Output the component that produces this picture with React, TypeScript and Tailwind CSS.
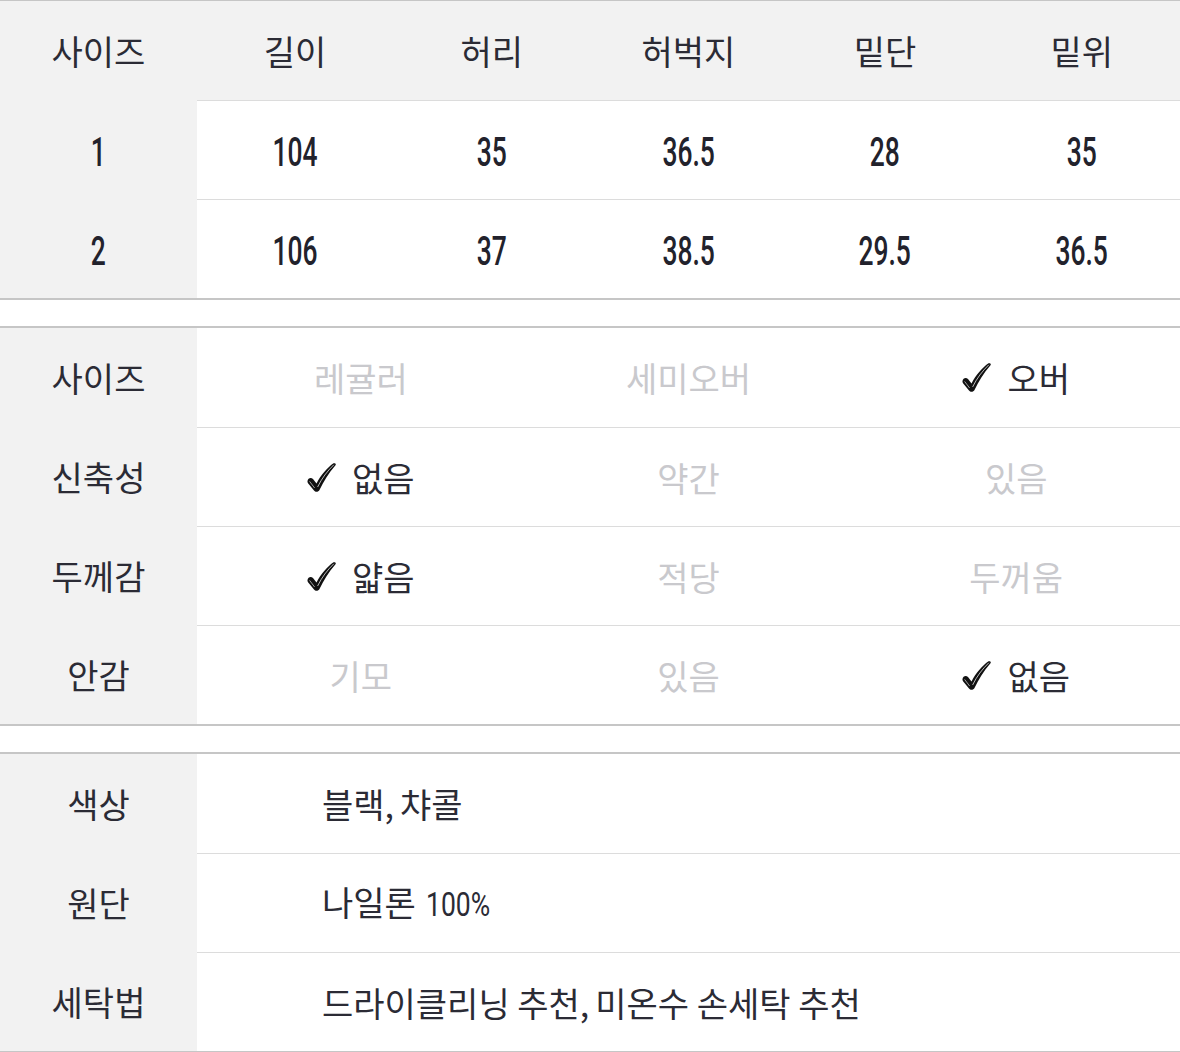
import React from 'react';

const kr = "font-['Noto_Sans_CJK_KR','Noto_Sans',sans-serif]";

// condensed digits: Roboto squeezed horizontally
const Num = ({ children, big }: { children: React.ReactNode; big?: boolean }) => (
    <span
        className={`inline-block font-['Roboto',sans-serif] ${big ? 'font-medium text-[40px] scale-x-[0.66] origin-center' : 'font-normal text-[34px] scale-x-[0.78] origin-left -mr-[14px] ml-[3px]'}`}
    >
        {children}
    </span>
);

const Check = () => (
    <svg width="29" height="29" viewBox="0 0 29 29" className="mr-[16px] shrink-0">
        {/* brush style check mark */}
        <path d="M0.5 18 C1 15 4 14 6 16 L9.5 20.5 C14 12 20 5 26.5 0.3 C28 -0.3 29.4 1 28.5 2.2 C21.5 10 16.5 18.5 12.5 27 C11.5 29 8.5 29.5 7 27.5 L1.2 20.5 C0.6 19.8 0.4 19 0.5 18 Z" fill="#111" />
        <path d="M10.6 24 C15 15 20 8.5 26.8 1.8" stroke="#fff" strokeWidth="0.7" fill="none" />
        <path d="M2.6 18.4 L7.6 25" stroke="#fff" strokeWidth="0.6" fill="none" />
    </svg>
);

const sizeHead = ['사이즈', '길이', '허리', '허벅지', '밑단', '밑위'];
const sizeRows = [
    ['1', '104', '35', '36.5', '28', '35'],
    ['2', '106', '37', '38.5', '29.5', '36.5'],
];

const fitRows: { label: string; opts: string[]; sel: number }[] = [
    { label: '사이즈', opts: ['레귤러', '세미오버', '오버'], sel: 2 },
    { label: '신축성', opts: ['없음', '약간', '있음'], sel: 0 },
    { label: '두께감', opts: ['얇음', '적당', '두꺼움'], sel: 0 },
    { label: '안감', opts: ['기모', '있음', '없음'], sel: 2 },
];

const Label = ({ children }: { children: React.ReactNode }) => (
    <div className="h-[99px] bg-[#f2f2f2] flex items-center justify-center text-[34px] text-[#2b2b35]">
        {children}
    </div>
);

export default function App() {
    return (
        <div className={`w-[1180px] bg-white ${kr}`}>
            {/* size table */}
            <div className="border-t border-b-2 border-[#c6c6c6]">
                <div className="grid grid-cols-6 bg-[#f2f2f2]">
                    {sizeHead.map((h) => (
                        <div key={h} className="h-[99px] flex items-center justify-center text-[34px] text-[#2b2b35]">
                            {h}
                        </div>
                    ))}
                </div>
                {sizeRows.map((r) => (
                    <div key={r[0]} className="grid grid-cols-6">
                        {r.map((v, i) => (
                            <div
                                key={i}
                                className={`h-[99px] flex items-center justify-center pt-[6px] text-[#22222c] ${i === 0 ? 'bg-[#f2f2f2]' : 'border-t border-[#dcdcdc]'}`}
                            >
                                <Num big>{v}</Num>
                            </div>
                        ))}
                    </div>
                ))}
            </div>

            {/* fit table */}
            <div className="mt-[26px] border-t-2 border-b-2 border-[#c6c6c6]">
                {fitRows.map((r, ri) => (
                    <div key={r.label} className="grid grid-cols-[197px_1fr_1fr_1fr]">
                        <Label>{r.label}</Label>
                        {r.opts.map((o, i) => (
                            <div
                                key={o + i}
                                className={`h-[99px] flex items-center justify-center text-[34px] ${ri > 0 ? 'border-t border-[#dcdcdc]' : ''} ${i === r.sel ? 'text-[#2b2b35]' : 'text-[#c9c9cd]'}`}
                            >
                                {i === r.sel && <Check />}
                                {o}
                            </div>
                        ))}
                    </div>
                ))}
            </div>

            {/* info table */}
            <div className="mt-[26px] border-t-2 border-b-2 border-[#c6c6c6]">
                {[
                    ['색상', <>블랙<span className="mr-[6px]">,</span>챠콜</>],
                    ['원단', <>나일론 <Num>100%</Num></>],
                    ['세탁법', <>드라이클리닝 추천<span className="mr-[6px]">,</span>미온수 손세탁 추천</>],
                ].map(([l, v], i) => (
                    <div key={i} className="grid grid-cols-[197px_1fr]">
                        <Label>{l}</Label>
                        <div className={`h-[99px] flex items-center pl-[125px] text-[34px] text-[#2b2b35] ${i > 0 ? 'border-t border-[#dcdcdc]' : ''}`}>
                            <span className="whitespace-pre">{v}</span>
                        </div>
                    </div>
                ))}
            </div>
        </div>
    );
}
